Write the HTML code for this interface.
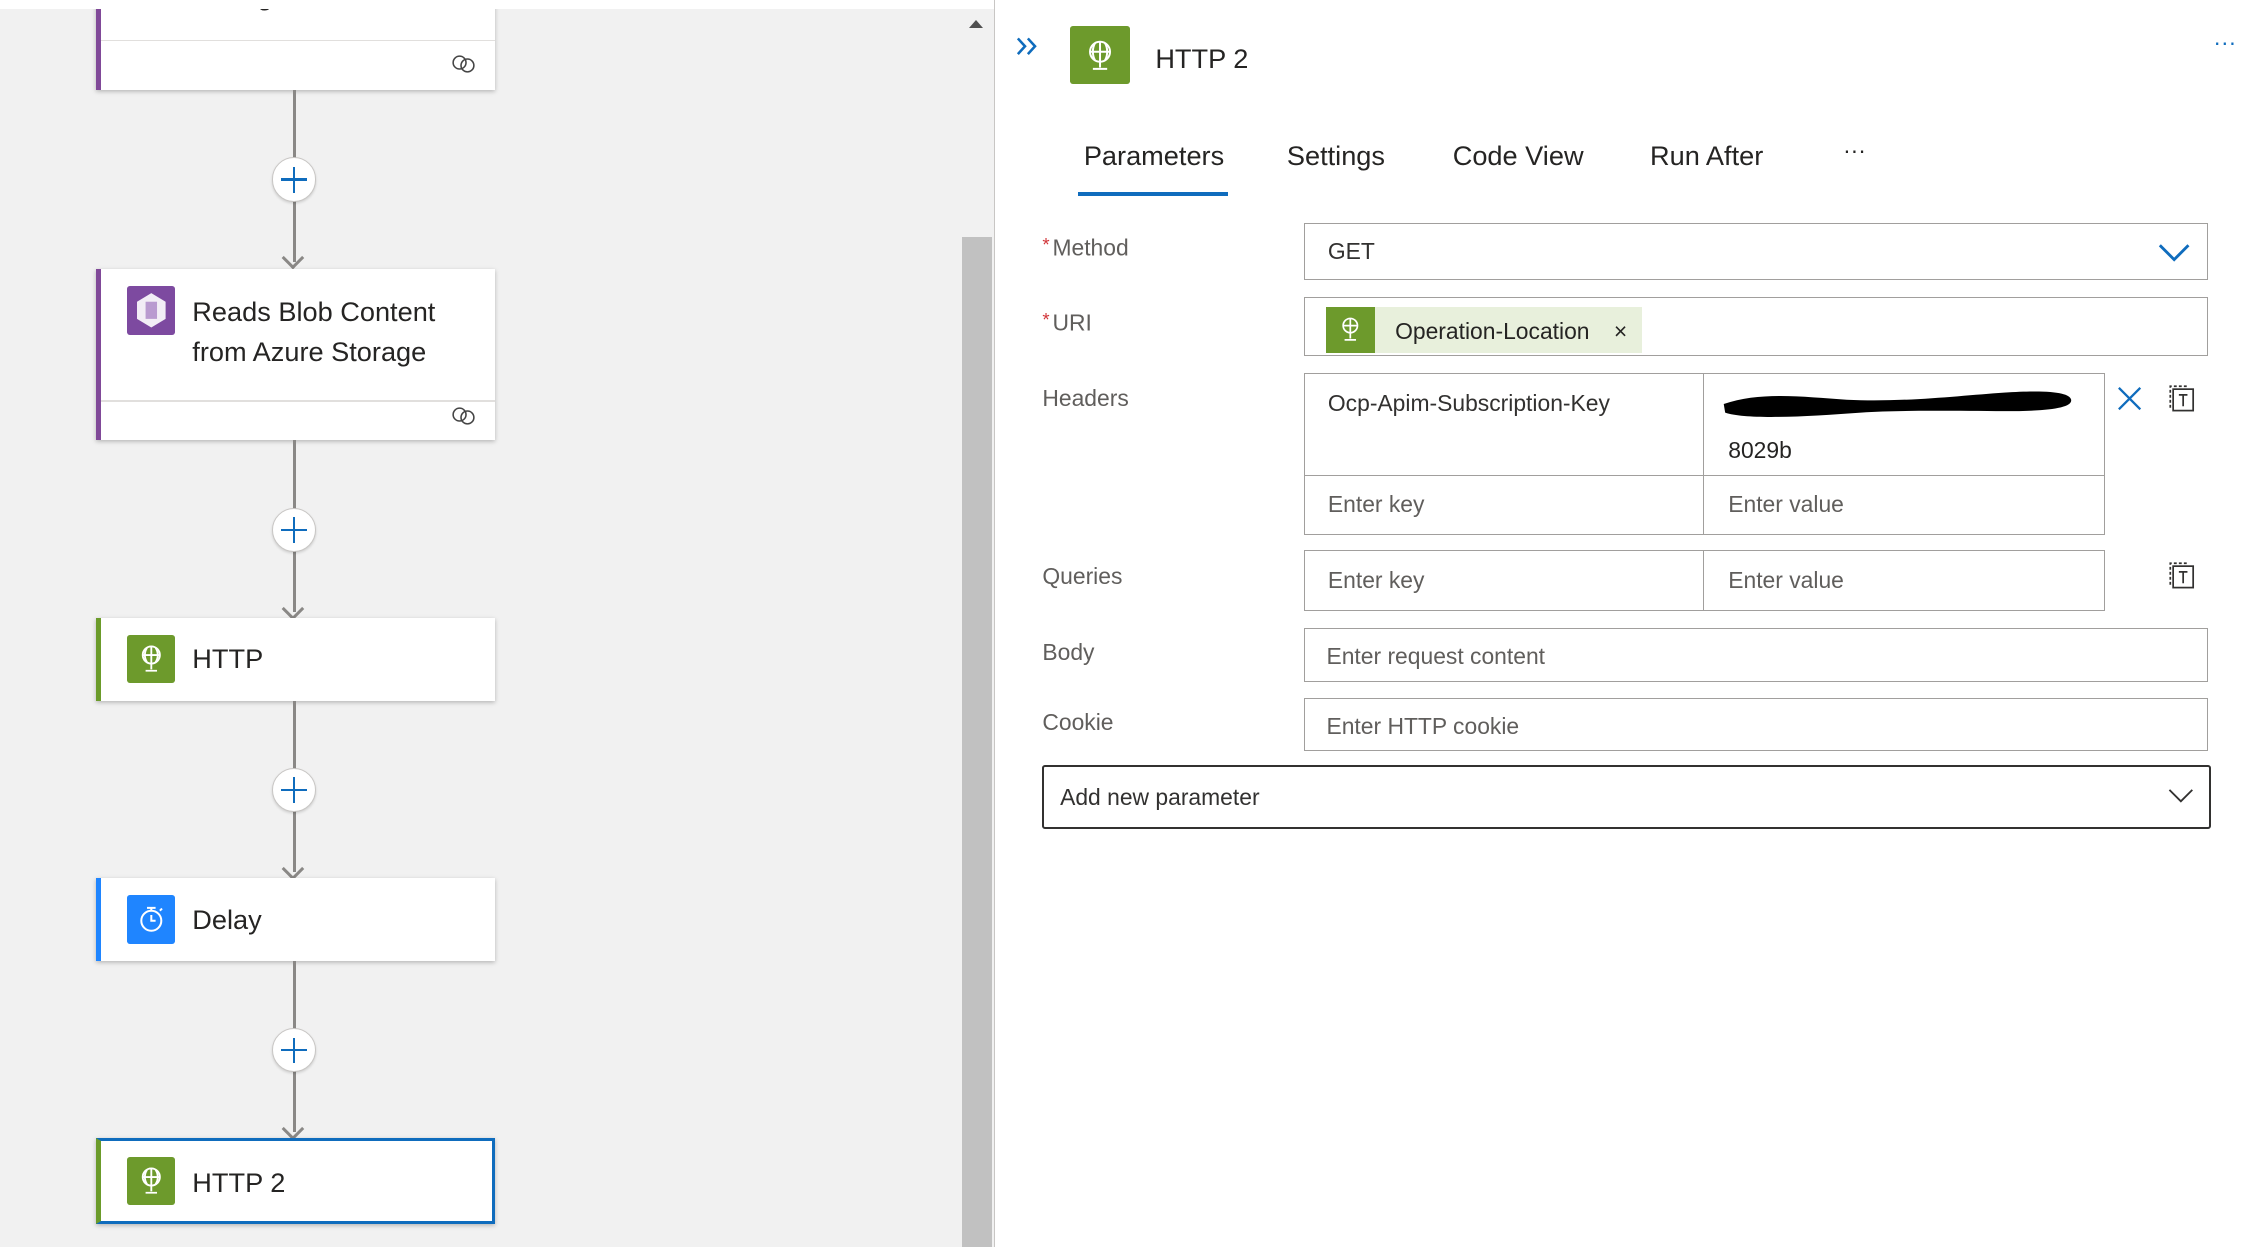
<!DOCTYPE html>
<html><head><meta charset="utf-8"><style>
html,body{margin:0;padding:0;width:2242px;height:1246px;overflow:hidden;background:#fff;font-family:"Liberation Sans",sans-serif;}
#w{position:absolute;left:0;top:0;width:1568px;height:872px;zoom:1.42985;}
.a{position:absolute;}
.card{position:absolute;left:67px;width:279px;background:#fff;box-shadow:0 1px 3px rgba(0,0,0,.25);box-sizing:border-box;border-left:4px solid;}
.ic{position:absolute;left:18px;width:34px;height:34px;border-radius:2px;}
.ct{position:absolute;left:64px;font-size:19px;color:#252423;}
.ln{position:absolute;left:205px;width:2px;background:#8a8886;}
.pl{position:absolute;left:190px;width:31px;height:31px;border-radius:50%;background:#fff;border:1px solid #c8c6c4;box-sizing:border-box;box-shadow:0 1px 2px rgba(0,0,0,.15)}
.pl:before{content:"";position:absolute;left:6px;top:14px;width:18px;height:1.6px;background:#0f6cbd}
.pl:after{content:"";position:absolute;left:14px;top:6px;width:1.6px;height:18px;background:#0f6cbd}
.ah{position:absolute;left:199px;width:9px;height:9px;border-right:2.5px solid #8a8886;border-bottom:2.5px solid #8a8886;transform:rotate(45deg);}
.lk{position:absolute;left:245px;}
.lab{position:absolute;left:729px;font-size:16px;color:#605e5c;}
.lab i{color:#d13438;font-style:normal;font-size:13px;margin-right:2px;vertical-align:3px}
.box{position:absolute;border:1px solid #a19f9d;box-sizing:border-box;font-size:16px;color:#323130;}
.ph{color:#605e5c}
.tab{position:absolute;top:98px;font-size:19px;color:#252423;}
</style></head><body><div id="w">
<div class="a" style="left:0;top:6px;width:695px;height:866px;background:#f1f1f1"></div>
<div class="a" style="left:673px;top:166px;width:21px;height:706px;background:#c1c1c1"></div>
<div class="a" style="left:678px;top:14px;width:0;height:0;border-left:5px solid transparent;border-right:5px solid transparent;border-bottom:6px solid #505050"></div>
<div class="a" style="left:695px;top:0;width:1px;height:872px;background:#c8c6c4"></div>

<!-- card 1 -->
<div class="card" style="top:-10px;height:73px;border-left-color:#804998">
 <div class="ct" style="top:-4px;font-weight:500">Storage</div>
 <div class="a" style="left:0;right:0;top:38px;height:1px;background:#e1dfdd"></div>
 <svg class="lk" style="top:48px" width="18" height="14" viewBox="0 0 18 14" fill="none" stroke="#444" stroke-width="1.1"><circle cx="6" cy="6" r="4.5"/><circle cx="11.5" cy="8" r="4.5"/></svg>
</div>
<div class="a" style="left:0;top:0;width:695px;height:6px;background:#fff"></div>
<div class="ln" style="top:63px;height:120px"></div>
<div class="pl" style="top:110px"></div>
<div class="ah" style="top:175px"></div>

<!-- card 2 -->
<div class="card" style="top:188px;height:120px;border-left-color:#804998">
 <div class="ic" style="top:12px;background:#7d4aa0"><svg width="34" height="34" viewBox="0 0 34 34"><polygon points="17,5 27,11 27,23 17,29 7,23 7,11" fill="#fff" opacity=".9"/><rect x="13" y="11" width="8" height="12" fill="#b99ad0"/></svg></div>
 <div class="ct" style="top:16px;line-height:28px;font-weight:500">Reads Blob Content<br>from Azure Storage</div>
 <div class="a" style="left:0;right:0;top:92px;height:1px;background:#e1dfdd"></div>
 <svg class="lk" style="top:96px" width="18" height="14" viewBox="0 0 18 14" fill="none" stroke="#444" stroke-width="1.1"><circle cx="6" cy="6" r="4.5"/><circle cx="11.5" cy="8" r="4.5"/></svg>
</div>
<div class="ln" style="top:308px;height:120px"></div>
<div class="pl" style="top:355px"></div>
<div class="ah" style="top:420px"></div>

<!-- card 3 HTTP -->
<div class="card" style="top:432px;height:58px;border-left-color:#6b9b2a">
 <div class="ic" style="top:12px;background:#6d9a2c"><svg width="34" height="34" viewBox="0 0 34 34" fill="none" stroke="#fff" stroke-width="1.3"><circle cx="17" cy="14" r="6"/><path d="M11 14h12M17 8v12M14 9c-2 3-2 7 0 10M20 9c2 3 2 7 0 10M17 20v4M13 25h8"/></svg></div>
 <div class="ct" style="top:18px;font-weight:500">HTTP</div>
</div>
<div class="ln" style="top:490px;height:120px"></div>
<div class="pl" style="top:537px"></div>
<div class="ah" style="top:602px"></div>

<!-- card 4 Delay -->
<div class="card" style="top:614px;height:58px;border-left-color:#1f85ff">
 <div class="ic" style="top:12px;background:#1f85ff"><svg width="34" height="34" viewBox="0 0 34 34" fill="none" stroke="#fff" stroke-width="1.4"><circle cx="17" cy="18" r="7"/><path d="M14 9h6M17 9v2M17 14v4h3M23 11l1.5-1.5"/></svg></div>
 <div class="ct" style="top:18px;font-weight:500">Delay</div>
</div>
<div class="ln" style="top:672px;height:120px"></div>
<div class="pl" style="top:719px"></div>
<div class="ah" style="top:784px"></div>

<!-- card 5 HTTP 2 -->
<div class="card" style="top:796px;height:60px;border:2.5px solid #0f6cbd;border-left:4px solid #6b9b2a">
 <div class="ic" style="top:11px;background:#6d9a2c"><svg width="34" height="34" viewBox="0 0 34 34" fill="none" stroke="#fff" stroke-width="1.3"><circle cx="17" cy="14" r="6"/><path d="M11 14h12M17 8v12M14 9c-2 3-2 7 0 10M20 9c2 3 2 7 0 10M17 20v4M13 25h8"/></svg></div>
 <div class="ct" style="top:18px;font-weight:500">HTTP 2</div>
</div>

<!-- right panel -->
<svg class="a" style="left:710px;top:26px" width="18" height="13" viewBox="0 0 18 13" fill="none" stroke="#0f6cbd" stroke-width="1.8"><path d="M2 1l5 5.5L2 12M9 1l5 5.5L9 12"/></svg>
<div class="a" style="left:748px;top:18px;width:42px;height:41px;background:#6d9a2c;border-radius:2px"><svg width="42" height="41" viewBox="0 0 42 41" fill="none" stroke="#fff" stroke-width="1.4"><circle cx="21" cy="18" r="7"/><path d="M14 18h14M21 11v14M17.5 12c-2 3.5-2 8.5 0 12M24.5 12c2 3.5 2 8.5 0 12M21 25v4M16 30h10"/></svg></div>
<div class="a" style="left:808px;top:30px;font-size:19px;color:#252423">HTTP 2</div>
<div class="a" style="left:1548px;top:20px;font-size:16px;color:#0f6cbd">···</div>

<div class="tab" style="left:758px">Parameters</div>
<div class="tab" style="left:900px">Settings</div>
<div class="tab" style="left:1016px">Code View</div>
<div class="tab" style="left:1154px">Run After</div>
<div class="tab" style="left:1289px;font-size:16px;top:96px">···</div>
<div class="a" style="left:754px;top:134px;width:105px;height:3px;background:#0f6cbd"></div>

<div class="lab" style="top:164px"><i>*</i>Method</div>
<div class="lab" style="top:216px"><i>*</i>URI</div>
<div class="lab" style="top:269px">Headers</div>
<div class="lab" style="top:394px">Queries</div>
<div class="lab" style="top:447px">Body</div>
<div class="lab" style="top:496px">Cookie</div>

<div class="box" style="left:912px;top:156px;width:632px;height:40px;padding:10px 16px">GET
 <svg class="a" style="left:596px;top:12px" width="24" height="16" viewBox="0 0 24 16"><path d="M2 3l10 10L22 3" fill="none" stroke="#0f6cbd" stroke-width="2"/></svg></div>
<div class="box" style="left:912px;top:208px;width:632px;height:41px">
 <div class="a" style="left:15px;top:6px;width:221px;height:32px;background:#e8f0dc"></div>
 <div class="a" style="left:15px;top:6px;width:34px;height:32px;background:#6d9a2c"><svg width="34" height="32" viewBox="0 0 34 32" fill="none" stroke="#fff" stroke-width="1.2"><circle cx="17" cy="13" r="5"/><path d="M12 13h10M17 8v10M17 18v4M13 23h8"/></svg></div>
 <div class="a" style="left:63px;top:14px;font-size:16px;color:#252423">Operation-Location</div>
 <div class="a" style="left:216px;top:14px;font-size:16px;color:#252423">×</div>
</div>

<div class="box" style="left:912px;top:261px;width:280px;height:72px;padding:11px 16px">Ocp-Apim-Subscription-Key</div>
<div class="box" style="left:1191px;top:261px;width:281px;height:72px">
 <svg class="a" style="left:10px;top:7px" width="250" height="26" viewBox="0 0 250 26"><path d="M4 14 C30 5 60 9 90 11 C130 13 170 8 200 6 C232 4 246 6 247 11 C248 17 230 19 200 19 C170 19 130 18 100 20 C60 23 20 25 5 20 Z" fill="#000"/></svg>
 <div class="a" style="left:17px;top:44px;font-size:16px;color:#252423">8029b</div>
</div>
<div class="box ph" style="left:912px;top:332px;width:280px;height:42px;padding:11px 16px">Enter key</div>
<div class="box ph" style="left:1191px;top:332px;width:281px;height:42px;padding:11px 17px">Enter value</div>
<svg class="a" style="left:1480px;top:269px" width="19" height="19" viewBox="0 0 19 19"><path d="M2 2l15 15M17 2L2 17" stroke="#0f6cbd" stroke-width="1.6"/></svg>
<svg class="a" style="left:1515px;top:267px" width="22" height="22" viewBox="0 0 22 22" fill="none" stroke="#323130" stroke-width="1.2"><rect x="5" y="5" width="14" height="15"/><path d="M3 18V3h12" stroke-dasharray="2 1.5"/><path d="M9 9h6M12 9v8"/></svg>

<div class="box ph" style="left:912px;top:385px;width:280px;height:42px;padding:11px 16px">Enter key</div>
<div class="box ph" style="left:1191px;top:385px;width:281px;height:42px;padding:11px 17px">Enter value</div>
<svg class="a" style="left:1515px;top:391px" width="22" height="22" viewBox="0 0 22 22" fill="none" stroke="#323130" stroke-width="1.2"><rect x="5" y="5" width="14" height="15"/><path d="M3 18V3h12" stroke-dasharray="2 1.5"/><path d="M9 9h6M12 9v8"/></svg>

<div class="box ph" style="left:912px;top:439px;width:632px;height:38px;padding:10px 15px">Enter request content</div>
<div class="box ph" style="left:912px;top:488px;width:632px;height:37px;padding:10px 15px">Enter HTTP cookie</div>

<div class="box" style="left:729px;top:535px;width:817px;height:45px;border:2px solid #323130;border-radius:2px;padding:12px 11px">Add new parameter
 <svg class="a" style="left:786px;top:14px" width="18" height="12" viewBox="0 0 18 12"><path d="M1 2l8 8 8-8" fill="none" stroke="#323130" stroke-width="1.3"/></svg></div>
</div></body></html>
